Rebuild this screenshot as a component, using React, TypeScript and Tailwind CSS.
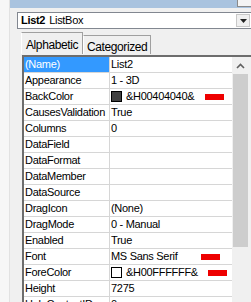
import React from 'react';

type Row = {
  name: string;
  value?: string;
  swatch?: string;
  mark?: number;
};

const rows: Row[] = [
  { name: '(Name)', value: 'List2' },
  { name: 'Appearance', value: '1 - 3D' },
  { name: 'BackColor', value: '&H00404040&', swatch: '#404040', mark: 206 },
  { name: 'CausesValidation', value: 'True' },
  { name: 'Columns', value: '0' },
  { name: 'DataField' },
  { name: 'DataFormat' },
  { name: 'DataMember' },
  { name: 'DataSource' },
  { name: 'DragIcon', value: '(None)' },
  { name: 'DragMode', value: '0 - Manual' },
  { name: 'Enabled', value: 'True' },
  { name: 'Font', value: 'MS Sans Serif', mark: 202 },
  { name: 'ForeColor', value: '&H00FFFFFF&', swatch: '#ffffff', mark: 209 },
  { name: 'Height', value: '7275' },
  { name: 'HelpContextID', value: '0' },
];

function PropRow({ row, selected }: { row: Row; selected: boolean }) {
  return (
    <div className="flex h-[16px] shrink-0 border-b border-[#d6d6d6]">
      <div
        className={
          selected
            ? 'w-[86px] shrink-0 pl-[1px] bg-[#3399ff] text-white border-r border-[#d6d6d6] leading-[15px] whitespace-nowrap overflow-hidden'
            : 'w-[86px] shrink-0 pl-[1px] bg-white text-black border-r border-[#d6d6d6] leading-[15px] whitespace-nowrap overflow-hidden'
        }
      >
        {row.name}
      </div>
      <div className="relative flex-1 flex items-center pl-[1px] bg-white text-black leading-[15px] whitespace-nowrap">
        {row.swatch && (
          <span
            className="mr-[4px] w-[11px] h-[11px] border border-black shrink-0"
            style={{ backgroundColor: row.swatch }}
          />
        )}
        <span>{row.value}</span>
        {row.mark && (
          <span
            className="absolute top-[5px] w-[19px] h-[6px] bg-[#ee0000]"
            style={{ left: row.mark - 111 }}
          />
        )}
      </div>
    </div>
  );
}

export default function App() {
  return (
    <div
      className="w-[251px] h-[302px] overflow-hidden flex bg-[#f0f0f0] text-[11px] tracking-[-0.3px] text-black"
      style={{ fontFamily: '"Liberation Sans", Arial, sans-serif' }}
    >
      <div className="w-[10px] shrink-0 bg-[#f7f7f7] border-r border-[#e2e2e2]" />
      <div className="flex-1 flex flex-col min-w-0">
        {/* title bar */}
        <div className="h-[8px] shrink-0 bg-[#a9c3df] flex justify-end">
          <div className="w-[14px] h-[7px] bg-[#f4f4f4] border-l border-b border-[#8a8a8a]" />
        </div>

        {/* object combo */}
        <div className="mt-[4px] ml-[7px] h-[17px] shrink-0 flex items-center bg-white border border-[#828790] border-r-0">
          <span className="pl-[3px] font-bold">List2</span>
          <span className="pl-[4px] flex-1">ListBox</span>
          <div className="w-[14px] h-[13px] mr-[1px] flex items-center justify-center bg-[#f0f0f0] border border-[#c8c8c8]">
            <svg width="7" height="4" viewBox="0 0 7 4">
              <path d="M0 0h7L3.5 4z" fill="#222" />
            </svg>
          </div>
        </div>

        {/* tabs */}
        <div className="mt-[3px] h-[22px] shrink-0 flex items-end pl-[11px] text-[12px] tracking-[-0.4px]">
          <div className="h-[22px] px-[4px] pt-[3px] bg-[#f0f0f0] border border-b-0 border-[#a0a0a0] border-l-white">
            Alphabetic
          </div>
          <div className="h-[19px] px-[3px] pt-[2px] bg-[#f0f0f0] border border-b-0 border-[#a0a0a0] border-l-white">
            Categorized
          </div>
        </div>

        {/* grid */}
        <div className="mt-[1px] ml-[12px] flex-1 flex border-t-2 border-l-2 border-[#6d6d6d] min-h-0">
          <div className="flex-1 flex flex-col min-w-0 overflow-hidden">
            {rows.map((r, i) => (
              <PropRow key={r.name} row={r} selected={i === 0} />
            ))}
          </div>
          <div className="w-[17px] shrink-0 flex flex-col bg-[#f0f0f0] mr-[2px]">
            <div className="h-[17px] flex items-center justify-center">
              <svg width="9" height="6" viewBox="0 0 9 6">
                <path d="M1 5L4.5 1.5L8 5" stroke="#606060" strokeWidth="1.6" fill="none" />
              </svg>
            </div>
            <div className="mx-[1px] h-[173px] bg-[#cdcdcd]" />
          </div>
        </div>
      </div>
    </div>
  );
}
